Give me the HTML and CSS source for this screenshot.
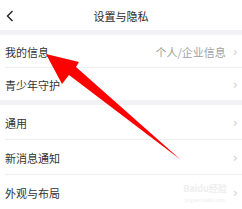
FILE: index.html
```html
<!DOCTYPE html>
<html lang="zh-CN">
<head>
<meta charset="utf-8">
<link rel="stylesheet" href="styles.css">
</head>
<body>
<div class="page">
  <header class="header">
    <svg class="back" width="10" height="12" viewBox="0 0 10 12"><path d="M7.5 1 L2.5 6 L7.5 11" fill="none" stroke="#222" stroke-width="1.4"/></svg>
    <div class="title">设置与隐私</div>
  </header>
  <div class="band"></div>
  <section class="group g1">
    <div class="row"><span class="label">我的信息</span><span class="value">个人/企业信息</span><span class="chev">›</span></div>
    <div class="row"><span class="label">青少年守护</span><span class="chev">›</span></div>
  </section>
  <div class="band"></div>
  <section class="group g2">
    <div class="row"><span class="label">通用</span><span class="chev">›</span></div>
    <div class="row"><span class="label">新消息通知</span><span class="chev">›</span></div>
    <div class="row"><span class="label">外观与布局</span><span class="chev">›</span></div>
  </section>
  <div class="watermark"><span class="wm1">Baidu经验</span><span class="wm2">jingyan.baidu.com</span></div>
  <svg class="arrow" width="242" height="209" viewBox="0 0 242 209"><polygon points="46,54 79,62 76,67 181,160 69,75 62,84" fill="#ff0000"/></svg>
</div>
</body>
</html>
```
FILE: styles.css
```css
html, body {
  margin: 0;
  padding: 0;
  background: #fff;
}
.page {
  position: relative;
  width: 242px;
  height: 209px;
  overflow: hidden;
  font-family: "Noto Sans CJK SC", "Noto Sans", sans-serif;
  color: #333;
}
.header {
  height: 30px;
  display: flex;
  align-items: center;
  justify-content: center;
  position: relative;
}
.back {
  position: absolute;
  left: 5px;
  top: 10px;
}
.title {
  font-size: 11px;
  color: #2a2a2a;
  margin-top: 2px;
}
.band {
  height: 5px;
  background: #f2f2f6;
}
.row {
  display: flex;
  align-items: center;
  margin-left: 5px;
  padding-right: 4px;
  border-bottom: 1px solid #efefef;
}
.row:last-child {
  border-bottom: none;
}
.g1 .row {
  height: 32px;
}
.g2 .row {
  height: 34px;
}
.label {
  font-size: 11px;
  color: #333;
  padding-top: 2px;
  margin-right: auto;
}
.value {
  font-size: 11px;
  color: #a0a0a0;
  margin-right: 7px;
  padding-top: 2px;
}
.chev {
  font-family: "DejaVu Sans", sans-serif;
  font-size: 13px;
  color: #d0d0d0;
  line-height: 1;
}
.watermark {
  position: absolute;
  left: 182px;
  top: 183px;
  width: 46px;
  display: flex;
  flex-direction: column;
  align-items: center;
  color: #eeeeee;
}
.wm1 {
  font-size: 9px;
  line-height: 12px;
  font-weight: bold;
}
.wm2 {
  font-family: "Liberation Sans", sans-serif;
  font-size: 5px;
  line-height: 6px;
  margin-top: 2px;
}
.arrow {
  position: absolute;
  left: 0;
  top: 0;
}
```
